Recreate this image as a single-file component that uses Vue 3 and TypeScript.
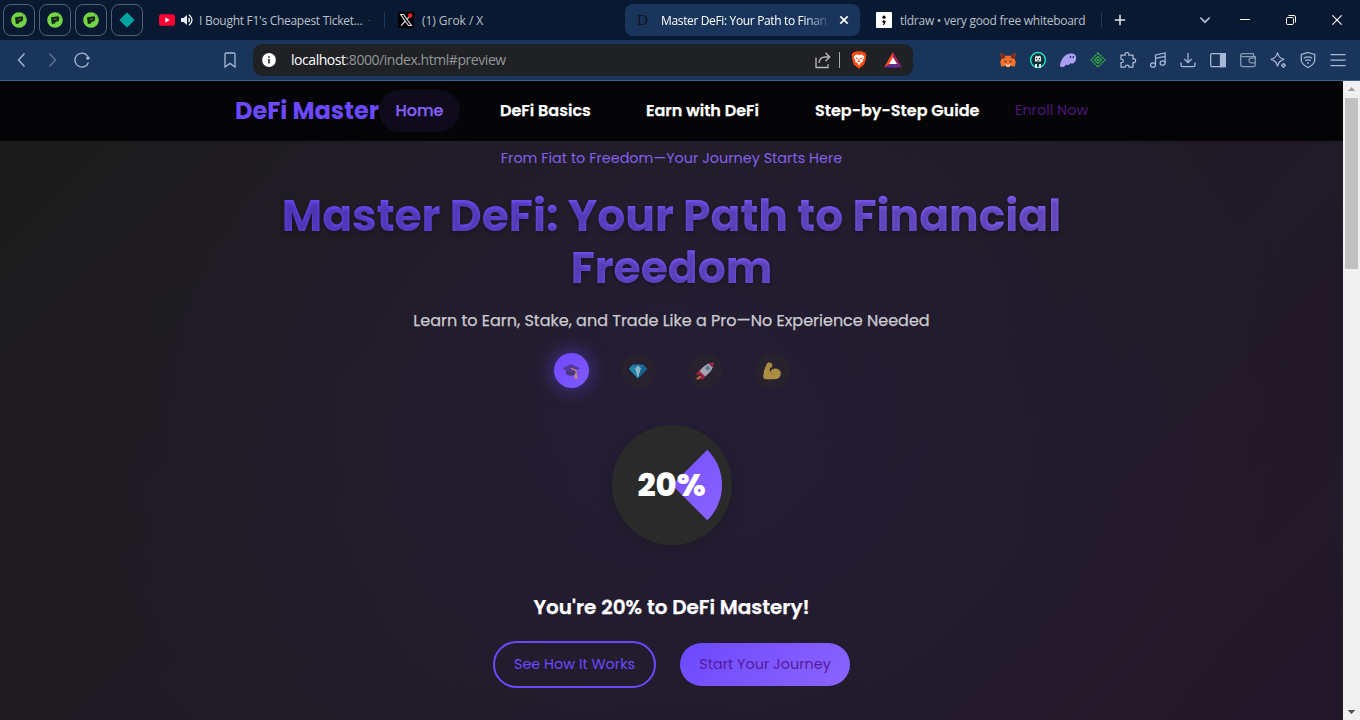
<script setup lang="ts">
interface NavItem {
  label: string
  cls: string
}

const pinned: number[] = [1, 2, 3]
const navItems: NavItem[] = [
  { label: 'Home', cls: 'home' },
  { label: 'DeFi Basics', cls: 'basics' },
  { label: 'Earn with DeFi', cls: 'earn' },
  { label: 'Step-by-Step Guide', cls: 'guide' },
]
</script>

<template>
  <div class="window">
    <header class="tabs">
      <div v-for="p in pinned" :key="p" class="pin">
        <svg width="16" height="16" viewBox="0 0 16 16">
          <circle cx="8" cy="8" r="7.8" fill="#75d643" />
          <path d="M4 5.300 11 4.200q1.300 0 1.200 1.500l-.3 2.600q-.2 1.200-1.500 1.300l-2 .3-.3 1.600-3.300.6z" fill="#18291c" />
          <path d="M6.800 6.700h2.900v1H6.800z" fill="#4c8c35" />
          <path d="m11 3 1.800-1.200M13.500 5.500l1.800-.6" stroke="#3d7a2e" stroke-width=".8" />
        </svg>
      </div>
      <div class="pin">
        <svg width="16" height="16" viewBox="0 0 16 16"><path d="M8 .8 15.200 8 8 15.200.8 8z" fill="#00a3a0" stroke="#00a3a0" stroke-linejoin="round" /></svg>
      </div>
      <div class="tab first">
        <svg width="16" height="16" viewBox="0 0 16 16"><rect y="2.200" width="16" height="11.600" rx="2.600" fill="#ff0033" /><path d="m6.300 5.400 4.500 2.600-4.500 2.600z" fill="#fff" /></svg>
        <svg class="sound" width="12" height="12" viewBox="0 0 12 12">
          <path d="M0 4h2.500L6 1v10L2.500 8H0z" fill="#e4e9f1" />
          <path d="M7.600 4q1.600 2 0 4M8 .8q6 5.200 0 10.400" fill="none" stroke="#e4e9f1" stroke-width="1.400" />
        </svg>
        <span class="tab-text video">I Bought F1's Cheapest Ticket...</span><i class="dash"></i>
      </div>
      <i class="divider"></i>
      <div class="tab">
        <svg width="16" height="16" viewBox="0 0 16 16">
          <path d="M0 0h16v16H0z" fill="#000" />
          <path d="M2.600 2.500h2.900l7.900 11h-2.900zM13 2.800 8.900 7.300M7.300 9 3 13.600" fill="none" stroke="#e2e2e2" stroke-width="1.100" />
          <circle cx="12.300" cy="3.500" r="2.200" fill="#f4212e" />
        </svg>
        <span class="tab-text grok">(1) Grok / X</span>
      </div>
      <div class="tab active">
        <span class="letter">D</span>
        <span class="tab-text current">Master DeFi: Your Path to Finan</span>
        <svg width="10" height="10" viewBox="0 0 10 10"><path d="m1.300 1.300 7.400 7.400M8.700 1.300 1.300 8.700" stroke="#fff" stroke-width="1.700" /></svg>
      </div>
      <div class="tab last">
        <svg width="16" height="16" viewBox="0 0 16 16"><rect width="16" height="16" rx=".8" fill="#fff" /><circle cx="8" cy="5.200" r="1.600" /><path d="M6.400 9.800a1.600 1.600 0 1 1 3.200 0q0 2.600-2.400 3.400l-.4-.6q1-.5 1.200-1.300-1.600 0-1.600-1.500z" /></svg>
        <span class="tab-text draw">tldraw • very good free whiteboard</span>
      </div>
      <i class="divider"></i>
      <div class="controls">
        <svg class="plus" width="12" height="12" viewBox="0 0 12 12"><path d="M6 .8v10.400M.8 6h10.400" stroke="#dde2e9" stroke-width="1.600" /></svg>
        <svg width="12" height="8" viewBox="0 0 12 8"><path d="m1.300 1.500 4.700 4.700 4.700-4.700" fill="none" stroke="#b3bfd1" stroke-width="1.700" /></svg>
        <svg width="10" height="10" viewBox="0 0 10 10"><path d="M0 4.500h10" stroke="#fff" /></svg>
        <svg width="10" height="10" viewBox="0 0 10 10"><g fill="none" stroke="#fff"><rect x=".5" y="2.500" width="7" height="7" rx="1.200" /><path d="M2.500.5H8q1.500 0 1.500 1.500v5.500" /></g></svg>
        <svg width="10" height="10" viewBox="0 0 10 10"><path d="m.4.4 9.200 9.200M9.600.4.4 9.600" stroke="#fff" stroke-width="1.100" /></svg>
      </div>
    </header>

    <div class="toolbar">
      <div class="history">
        <svg class="ico" viewBox="0 0 20 20"><path d="m12.500 3.500-6 6.500 6 6.500" /></svg>
        <svg class="ico dim" viewBox="0 0 20 20"><path d="m7.500 3.500 6 6.500-6 6.500" /></svg>
        <svg class="ico" viewBox="0 0 20 20"><path d="M15.500 5.800A7 7 0 1 0 16.500 12.500" /><circle cx="15.900" cy="8" r="1.800" fill="#a9b9d4" stroke="none" /></svg>
      </div>
      <svg class="ico bookmark" viewBox="0 0 20 20"><path d="M5 4.200q0-1.200 1.200-1.200h7.600Q15 3 15 4.200V17l-5-3.600L5 17z" /></svg>
      <div class="address">
        <svg class="info" width="14" height="14" viewBox="0 0 14 14"><circle cx="7" cy="7" r="6.900" fill="#fff" /><path d="M6.200 6h1.600v4.500H6.200zM6.200 3.200h1.600v1.600H6.200z" fill="#202124" /></svg>
        <span class="url"><b>localhost</b>:8000/index.html#preview</span>
        <svg class="share" width="18" height="18" viewBox="0 0 18 18"><path d="M2 6.500v10h12v-3.200M5 12q.5-6 6.500-6h3M11.500 1.800 15.800 6l-4.300 4.200" fill="none" stroke="#b9babc" stroke-width="1.300" /></svg>
        <i class="bar"></i>
        <svg class="brave" width="16" height="18" viewBox="0 0 16 18">
          <path d="m4.200 1 1.200-.8h5.200l1.200.8 1.900.2L15.500 4l-.8 1.700.4 1.300-1.900 6.600L8 17.800l-5.200-4.200L.9 7l.4-1.300L.5 4l1.800-2.800z" fill="#fb4b12" />
          <path d="M5 3.400 8 4l3-.6 2.500 2.600-1.900 3.300.3 1.400-2.500 1.400L8 14.700l-1.400-2.600-2.500-1.400.3-1.400L2.500 6z" fill="#fff" />
          <path d="m4 6.300 2.800.8-.7 1.600zM12 6.300l-2.800.8.7 1.600zM8 6l.5 3.500 1.200.8L8 11.600l-1.700-1.300 1.200-.8z" fill="#fb4b12" />
        </svg>
        <svg width="18" height="16" viewBox="0 0 18 16"><path d="M9 0 0 15.500l9-5.200z" fill="#ff4724" /><path d="m9 0 9 15.500-9-5.200z" fill="#9e1f63" /><path d="M0 15.500h18l-9-5.200z" fill="#662d91" /><path d="M9 5.200 13 12H5z" fill="#fff" /></svg>
      </div>
      <div class="extensions">
        <svg viewBox="0 0 20 20"><path d="m2.300 2.800 5.200 3h5l5.200-3-.9 6.500 1 3.200-1.300 4.300-3.700-1-1.700 1.400H8.900l-1.700-1.400-3.700 1-1.300-4.300 1-3.200z" fill="#f5732c" /><path d="m2.300 2.800 5.200 3-1 2.700-3.600.5zM17.700 2.800l-5.200 3 1 2.700 3.600.5z" fill="#7b2d19" /><path d="m6 10.500 2.500.5-.4 2zM14 10.500l-2.500.5.4 2z" fill="#233447" /><path d="m7.500 14 1 2.500h3l1-2.500-2.500.7z" fill="#d7c9bd" /></svg>
        <svg viewBox="0 0 20 20"><circle cx="10" cy="10" r="7.400" fill="#132f38" stroke="#1de0c5" stroke-width="1.500" /><path d="M7 11.500V7.300L8 5.500l1.300.8h1.400l1.300-.8 1 1.800v4.200zM7 14h2v4H7zM11 14h2v4h-2z" fill="#dfe8e8" /><path d="M8 8h1.200v1.300H8zM10.800 8H12v1.300h-1.200zM9.500 10h1.200v1H9.500z" fill="#132f38" /></svg>
        <svg viewBox="0 0 20 20"><path d="M2 14.500C4 7.500 8 3 14 3.500c4.500.4 5.200 5 3 8.300-1.400 2.200-3.300 2-4.700 1.400-1.300 1.800-2.600 2.200-4 1.200C6.500 17.300 1.600 18.500 2 14.500z" fill="#ab9ff2" /><path d="M12.500 6v2M15.300 6v2" stroke="#1a355b" stroke-width="1.300" /></svg>
        <svg viewBox="0 0 20 20"><path d="m10 3 7 7-7 7-7-7z" fill="none" stroke="#35a844" stroke-width="1.500" stroke-dasharray="2 .9" /><path d="m10 6.500 3.500 3.500-3.500 3.500L6.500 10z" fill="none" stroke="#35a844" stroke-width="1.200" /><circle cx="10" cy="10" r="1.200" fill="#35a844" /></svg>
        <svg class="line" viewBox="0 0 20 20"><path d="M3 5h4.200Q6.700 2.500 9 2.500T10.800 5H15v4q2.600-.5 2.600 1.600T15 12.500v4.700h-4q.3-2.200-1.800-2.200t-1.800 2.200H3v-4.500q2.200.2 2.200-1.700T3 9.200z" /></svg>
        <svg class="line" viewBox="0 0 20 20"><ellipse cx="5" cy="15" rx="2.500" ry="2.200" /><ellipse cx="14.600" cy="13" rx="2.500" ry="2.200" /><path d="M7.500 15V5l9.600-2v10M7.500 8.300l9.600-2" /></svg>
        <svg class="line" viewBox="0 0 20 20"><path d="M10 3v9.500M6.300 9l3.700 3.700L13.700 9M3 12.500v2.300Q3 16.700 5 16.700h10q2 0 2-1.900v-2.300" /></svg>
        <svg class="line" viewBox="0 0 20 20"><rect x="2.700" y="3.500" width="14.600" height="13" rx="1" /><path d="M12.500 3.500h4.800v13h-4.800z" fill="#a9b9d4" /></svg>
        <svg class="line soft" viewBox="0 0 20 20"><path d="M17.300 8V6.500H4.500Q2.700 6.500 2.700 5t1.800-1.500h11v3M2.700 5v9.500q0 2 2 2h10.600q2 0 2-2V13" /><path d="M17.300 8.200h-4a2.300 2.300 0 0 0 0 4.600h4z" /></svg>
        <svg class="line" viewBox="0 0 20 20"><path d="M9.500 2.500q1 5.700 6.700 6.800-5.700 1.200-6.700 7-1-5.800-6.700-7Q8.500 8.200 9.500 2.500zM15.500 13q.3 2.100 2.400 2.400-2.100.3-2.400 2.400-.3-2.100-2.400-2.400 2.100-.3 2.400-2.400z" /></svg>
        <svg class="line" viewBox="0 0 20 20"><path d="m10 2.500 6.700 2v5.800q0 4.200-6.700 7.200-6.700-3-6.700-7.200V4.500zM5.800 8.200q4.200-2.500 8.400 0M7.300 10.700q2.700-1.500 5.400 0M9 13h2" /></svg>
        <svg class="line" viewBox="0 0 20 20"><path d="M2.500 4.500h15M2.500 10h15M2.500 15.500h15" /></svg>
      </div>
    </div>

    <div class="viewport">
      <div class="page">
        <nav class="nav">
          <strong class="brand">DeFi Master</strong>
          <a v-for="item in navItems" :key="item.label" class="link" :class="item.cls"><span>{{ item.label }}</span></a>
          <a class="enroll">Enroll Now</a>
        </nav>
        <main class="hero">
          <p class="tagline">From Fiat to Freedom—Your Journey Starts Here</p>
          <h1>Master DeFi: Your Path to Financial Freedom</h1>
          <p class="lead">Learn to Earn, Stake, and Trade Like a Pro—No Experience Needed</p>
          <div class="steps">
            <div class="step on">
              <svg width="18" height="18" viewBox="0 0 18 18"><path d="M4 8v4q5 3.500 10 0V8z" fill="#49347c" /><path d="m9 2 9 4.200-9 4.600-9-4.600z" fill="#573a99" /><path d="m9 6.200 5 2.200v3.400" fill="none" stroke="#cc8b80" stroke-width="1.100" /><path d="M12.800 11.500h2.200l.5 5.300h-3z" fill="#cb8a77" /></svg>
            </div>
            <div class="step">
              <svg width="18" height="18" viewBox="0 0 18 18"><path d="M4 2.500h10L18 7l-9 9.500L0 7z" fill="#1c6ea4" /><path d="M0 7 4 2.500 6 7l3 9.500z" fill="#2283ac" /><path d="M6 6.500 9 3.200l3 3.300-3 10z" fill="#8ab5c5" /><path d="m12 6.500 2-4L18 7l-9 9.500z" fill="#176493" /></svg>
            </div>
            <div class="step">
              <svg width="18" height="18" viewBox="0 0 18 18"><path d="m5 7-4.500 4 .2 2.500L5 12zM11 13l-4 4.500-2.300-.2L6 12z" fill="#97203f" /><path d="M3.800 13.500.5 15.700v1.800h2.800l2.500-2.700z" fill="#b36340" /><path d="M17.300.7q1 7.300-8.300 13.800l-5.500-5.300Q10 .2 17.300.7z" fill="#a7a5b3" /><path d="M17.300.7q.3 2.600-.8 4.900L12.400 1.500q2.300-1 4.900-.8zM3.500 9.200 9 14.500l-2 1-4.500-4.300z" fill="#9e1d40" /><circle cx="11.800" cy="6.200" r="2.100" fill="#47799e" stroke="#80808e" stroke-width=".6" /></svg>
            </div>
            <div class="step">
              <svg width="18" height="18" viewBox="0 0 18 18"><path d="M4.500.7Q9-.2 9.300 3q.2 2.800-2 2.900-1 1.900-.1 4Q9 6.200 12.800 6.500q5 .7 5 5.300 0 5.500-7.800 5.500H3Q.2 17.300.2 13.800.4 8 3.200 3.200z" fill="#aa8e42" /><path d="M7.200 9.800q.8 2 3.200 2.100M6.700 4.500l.7 1.500" stroke="#806a37" fill="none" stroke-width=".7" /></svg>
            </div>
          </div>
          <div class="progress">
            <svg width="120" height="120" viewBox="0 0 120 120">
              <defs><linearGradient id="slice" gradientUnits="userSpaceOnUse" x1="10" y1="10" x2="110" y2="110"><stop stop-color="#6c48ff" /><stop offset="1" stop-color="#8b65ff" /></linearGradient></defs>
              <path d="M60 60 95.360 24.640A50 50 0 0 1 95.360 95.360z" fill="url(#slice)" />
            </svg>
            <span class="percent">20%</span>
          </div>
          <h2>You're 20% to DeFi Mastery!</h2>
          <div class="buttons">
            <a class="button outline"><span>See How It Works</span></a>
            <a class="button filled"><span>Start Your Journey</span></a>
          </div>
        </main>
      </div>
      <aside class="scrollbar">
        <svg width="17" height="17" viewBox="0 0 17 17"><path d="m8.500 6 3.800 4H4.700z" fill="#a0a0a0" /></svg>
        <div class="thumb"></div>
        <svg width="17" height="17" viewBox="0 0 17 17"><path d="m4.700 7 3.800 4 3.800-4z" fill="#505050" /></svg>
      </aside>
    </div>
  </div>
</template>

<style>
html, body { margin: 0; overflow: hidden; background: #1c1a20; }
</style>

<style scoped>
.window { width: 1360px; height: 720px; overflow: hidden; display: flex; flex-direction: column; font-family: "Open Sans", "Noto Sans", sans-serif; }
.window *, .window { box-sizing: border-box; }
svg { display: block; flex: none; }
.tabs { height: 40px; flex: none; background: #091931; display: flex; align-items: center; padding-left: 3px; }
.pin { width: 32px; height: 32px; flex: none; margin-right: 4px; border: 1px solid #536073; border-radius: 8px; display: grid; place-items: center; }
.tab { width: 236px; height: 32px; flex: none; display: flex; align-items: center; gap: 8px; padding-left: 12px; border-radius: 8px; color: #b9c0ca; font-size: 12px; }
.first { margin-right: 1px; gap: 6px; }
.dash { width: 2px; height: 1px; background: #34425a; }
.tab-text { white-space: nowrap; }
.divider { width: 1px; height: 16px; background: #1b3960; flex: none; margin-right: 1px; }
.active { width: 235px; margin: 0 4px 0 3px; background: #1a355b; color: #fff; }
.letter { width: 16px; color: #10151e; font: 15px "Liberation Serif", serif; }
.current { width: 167px; letter-spacing: -.35px; mask-image: linear-gradient(90deg, #000 142px, transparent 170px); }
.active svg { margin-left: 3px; }
.video { letter-spacing: -.28px; }
.grok { letter-spacing: -.05px; }
.draw { letter-spacing: -.26px; }
.last { margin-right: 1px; }
.controls { display: flex; height: 40px; flex: 1; align-items: center; padding-left: 11px; }
.controls .plus { margin-right: 73px; }
.controls svg + svg { margin-right: 29px; }
.controls svg:nth-child(3) { margin-right: 36px; }
.controls svg:nth-child(4) { margin-right: 36px; }
.controls svg:nth-child(5) { margin-right: 0; }
.toolbar { height: 41px; flex: none; background: #1a355b; border-bottom: 1px solid #3f6087; display: flex; align-items: center; }
.history { display: flex; gap: 10px; margin-left: 12px; }
.ico { width: 20px; height: 20px; fill: none; stroke: #a9b9d4; stroke-width: 1.300; }
.dim { opacity: .5; }
.bookmark { margin-left: 128px; }
.address { width: 660px; height: 32px; margin-left: 13px; background: #202124; border-radius: 9px; display: flex; align-items: center; padding: 0 11px 0 9px; }
.url { margin: -1px 0 0 15px; color: #92969b; font-size: 14px; letter-spacing: -.45px; flex: 1; }
.url b { color: #fff; font-weight: 400; }
.bar { height: 16px; width: 1px; background: #a7a8aa; margin: 0 11px 0 7px; }
.brave { margin-right: 17px; }
.extensions { margin-left: 85px; display: flex; gap: 10px; }
.extensions svg { width: 20px; height: 20px; }
.line { fill: none; stroke: #a9b9d4; stroke-width: 1.250; }
.soft { opacity: .75; }
.viewport { flex: 1; display: flex; min-height: 0; }
.page { width: 1343px; flex: none; font-family: "Poppins", "Inter", sans-serif; background: radial-gradient(ellipse 620px 520px at 50% 52%, rgba(44,36,86,.36), rgba(42,34,80,.2) 50%, transparent), linear-gradient(135deg, #1b1b1b, #201b22 35%, #211a26 65%, #22182a); }
.nav { height: 60px; background: #050507; display: flex; align-items: center; padding: 0 0 2px 235px; white-space: nowrap; }
.brand { width: 144px; font-size: 24px; color: #6c48ff; }
.link { font-size: 16px; font-weight: 600; color: #fff; -webkit-text-stroke: .25px currentColor; }
.home { width: 81px; height: 42px; margin: 2px 40px 0 0; padding-bottom: 2px; border-radius: 21px; background: #0f0b1c; color: #8560f5; display: grid; place-items: center; font-weight: 500; }
.basics { width: 146px; }
.earn { width: 169px; }
.guide { width: 200px; }
.enroll { font-size: 14.400px; color: #4b1778; }
.hero { display: flex; flex-direction: column; align-items: center; white-space: nowrap; }
p, h1, h2 { margin: 0; }
.tagline { height: 22px; line-height: 22px; margin-top: 6px; font-size: 14.400px; color: #8560eb; }
h1 { width: 800px; height: 104px; margin-top: 21px; line-height: 52px; font-size: 44px; font-weight: 700; white-space: normal; text-align: center; color: transparent; background: linear-gradient(135deg, #6c48ff, #8b65ff); background-clip: text; -webkit-background-clip: text; text-shadow: 0 2px 4px rgba(0,0,0,.3); }
.lead { height: 26px; line-height: 26px; margin-top: 14px; font-size: 16px; color: #cccbd0; -webkit-text-stroke: .25px currentColor; }
.steps { display: flex; gap: 32px; margin-top: 19px; }
.step { width: 35px; height: 35px; border-radius: 50%; background: #27222e; display: grid; place-items: center; }
.on { background: linear-gradient(135deg, #7049ff, #805bff); box-shadow: 0 0 20px rgba(108,72,255,.6); }
.progress { width: 120px; height: 120px; margin-top: 37px; border-radius: 50%; background: #2a2a2a; box-shadow: 0 4px 15px rgba(0,0,0,.18); display: grid; }
.progress > * { grid-area: 1 / 1; place-self: center; }
.percent { color: #fff; font-size: 32px; font-weight: 800; }
h2 { height: 30px; line-height: 30px; margin-top: 47px; font-size: 20px; font-weight: 600; color: #fff; -webkit-text-stroke: .25px currentColor; }
.buttons { margin-top: 19px; display: flex; align-items: center; gap: 24px; }
.button { display: grid; place-items: center; font-size: 14.400px; }
.outline { width: 163px; height: 47px; border: 2px solid #6c48ff; border-radius: 24px; color: #6c48ff; }
.filled { width: 170px; height: 43px; border-radius: 22px; background: linear-gradient(135deg, #6c48ff, #8b65ff); color: #551a9b; }
.scrollbar { width: 17px; background: #f0f0f0; display: flex; flex-direction: column; align-items: center; }
.thumb { width: 13px; height: 171px; background: #c1c1c1; margin-bottom: auto; }
</style>
